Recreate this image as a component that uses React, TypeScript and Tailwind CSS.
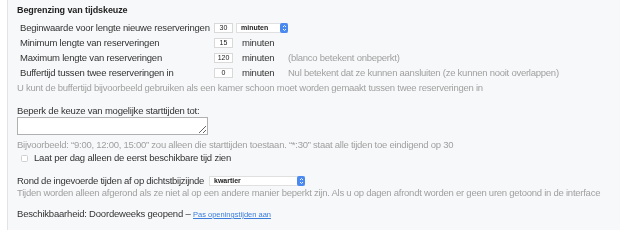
const sans = "font-['Liberation_Sans',Arial,sans-serif]";
const label = "text-[9.5px] leading-[12px] tracking-[-0.2px] text-[#333]";
const help = "text-[9.5px] leading-[12px] tracking-[-0.25px] text-[#a0a0a0]";

function NumBox({ value }: { value: string }) {
  return (
    <span className="flex h-[10px] w-[19px] items-center justify-center border border-[#d9d9d9] bg-white text-[7px] leading-none text-[#222]">
      {value}
    </span>
  );
}

function Stepper() {
  return (
    <span className="flex h-[10px] w-[8px] shrink-0 items-center justify-center rounded-[2px] bg-[#4a8af0]">
      <svg width="5" height="8" viewBox="0 0 5 8">
        <path d="M1 3 L2.5 1.5 L4 3" stroke="white" strokeWidth="0.9" fill="none" />
        <path d="M1 5 L2.5 6.5 L4 5" stroke="white" strokeWidth="0.9" fill="none" />
      </svg>
    </span>
  );
}

function Row({ text, value, unit, note }: { text: string; value: string; unit?: React.ReactNode; note?: string }) {
  return (
    <div className="flex h-[15px] items-center">
      <span className={`w-[194px] ${label}`}>{text}</span>
      <NumBox value={value} />
      {unit ?? <span className={`ml-[9px] w-[46px] ${label}`}>minuten</span>}
      {note && <span className={help}>{note}</span>}
    </div>
  );
}

export default function App() {
  return (
    <div className={`flex h-[230px] w-[620px] overflow-hidden bg-white ${sans}`}>
      <div className="ml-[7px] flex-1 border-l border-[#e2e3e6] bg-[#f7f8fa] pl-[9px] pt-[4px]">
        <h3 className="text-[9px] font-bold leading-[12px] tracking-[-0.1px] text-[#222]">Begrenzing van tijdskeuze</h3>
        <div className="mt-[4px] pl-[3px]">
          <Row
            text="Beginwaarde voor lengte nieuwe reserveringen"
            value="30"
            unit={
              <span className="ml-[3px] flex h-[10px] w-[52px] items-center justify-between border-y border-l border-[#e0e0e0] bg-white pl-[4px] text-[7px] font-bold leading-none text-[#222]">
                minuten
                <Stepper />
              </span>
            }
          />
          <Row text="Minimum lengte van reserveringen" value="15" />
          <Row text="Maximum lengte van reserveringen" value="120" note="(blanco betekent onbeperkt)" />
          <Row
            text="Buffertijd tussen twee reserveringen in"
            value="0"
            note="Nul betekent dat ze kunnen aansluiten (ze kunnen nooit overlappen)"
          />
        </div>
        <p className={`mt-[2px] ${help}`}>
          U kunt de buffertijd bijvoorbeeld gebruiken als een kamer schoon moet worden gemaakt tussen twee reserveringen in
        </p>

        <p className={`mt-[11px] ${label}`}>Beperk de keuze van mogelijke starttijden tot:</p>
        <textarea className="block h-[18px] w-[191px] resize-y border border-[#b0b0b0] bg-white" />
        <p className={`mt-[4px] ${help}`}>
          Bijvoorbeeld: “9:00, 12:00, 15:00” zou alleen die starttijden toestaan. “*:30” staat alle tijden toe eindigend op 30
        </p>
        <label className={`mt-[1px] flex items-center gap-[6px] pl-[4px] ${label}`}>
          <span className="h-[7px] w-[7px] rounded-[1.5px] border border-[#cfcfcf] bg-white" />
          Laat per dag alleen de eerst beschikbare tijd zien
        </label>

        <div className="mt-[10px] flex h-[13px] items-center">
          <span className="w-[192px] shrink-0 whitespace-nowrap text-[9.5px] leading-[12px] tracking-[-0.25px] text-[#333]">
            Rond de ingevoerde tijden af op dichtstbijzijnde
          </span>
          <span className="flex h-[10px] w-[96px] shrink-0 items-center justify-between border-y border-l border-[#e0e0e0] bg-white pl-[4px] text-[7px] font-bold leading-none text-[#222]">
            kwartier
            <Stepper />
          </span>
        </div>
        <p className={help}>
          Tijden worden alleen afgerond als ze niet al op een andere manier beperkt zijn. Als u op dagen afrondt worden er geen uren getoond in de interface
        </p>

        <p className={`mt-[9px] ${label}`}>
          Beschikbaarheid: Doordeweeks geopend –{" "}
          <a className="text-[7.5px] tracking-normal text-[#3b7dd8] underline">Pas openingstijden aan</a>
        </p>
      </div>
    </div>
  );
}
